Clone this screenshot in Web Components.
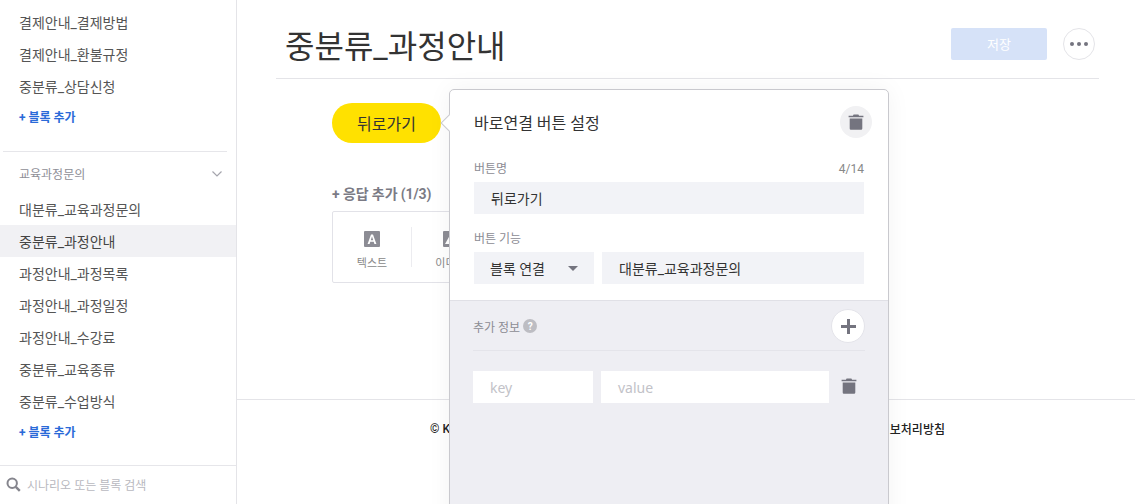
<!DOCTYPE html>
<html lang="ko">
<head>
<meta charset="utf-8">
<title>중분류_과정안내</title>
<style>
  html, body { margin: 0; height: 100%; overflow: hidden; background: #fff; }
  body { font-family: Roboto, "Noto Sans CJK KR", sans-serif; color: #333; }
</style>
</head>
<body>
<bot-app></bot-app>

<script>
const TRASH = `<svg viewBox="0 0 16 16" width="16" height="16" fill="#74747f"><path d="M5.6 0.4h4.8l.7 1.4H15.4v1.5H0.6V1.8h4.3z"/><path d="M1.7 4.6h12.6V14.6a1.2 1.2 0 0 1-1.2 1.2H2.9a1.2 1.2 0 0 1-1.2-1.2z"/></svg>`;

class SideItem extends HTMLElement {
  connectedCallback() {
    this.attachShadow({ mode: "open" }).innerHTML = `
      <style>
        :host { display: flex; align-items: center; height: 32px; padding-left: 19px; font-size: 14px; color: #555; white-space: nowrap; }
        :host([active]) { background: #f1f1f4; color: #444; }
      </style>
      <slot></slot>`;
  }
}

class SideAdd extends HTMLElement {
  connectedCallback() {
    this.attachShadow({ mode: "open" }).innerHTML = `
      <style>
        :host { display: flex; align-items: center; height: 28px; padding-left: 19px; font-size: 12px; font-weight: 700; color: #2a6ad8; }
      </style>
      + 블록 추가`;
  }
}

class SideNav extends HTMLElement {
  connectedCallback() {
    this.attachShadow({ mode: "open" }).innerHTML = `
      <style>
        :host { display: flex; flex-direction: column; flex: none; width: 236px; height: 504px; border-right: 1px solid #e4e4e8; background: #fff; }
        .list { flex: 1; padding-top: 6px; min-height: 0; }
        hr { border: 0; border-top: 1px solid #e6e6ea; margin: 21px 9px 0 3px; }
        .group { display: flex; align-items: center; justify-content: space-between; box-sizing: border-box; height: 41px; padding: 2px 14px 0 19px; font-size: 12px; color: #8e8e96; }
        .search { display: flex; align-items: center; gap: 6px; height: 39px; box-sizing: border-box; padding: 0 0 1px 6px; border-top: 1px solid #e6e6ea; font-size: 12px; color: #b9b9c0; }
        svg { display: block; }
      </style>
      <div class="list">
        <side-item>결제안내_결제방법</side-item>
        <side-item>결제안내_환불규정</side-item>
        <side-item>중분류_상담신청</side-item>
        <side-add></side-add>
        <hr>
        <div class="group">교육과정문의
          <svg width="10" height="6" viewBox="0 0 10 6" fill="none" stroke="#a5a5ad" stroke-width="1.2"><path d="M.5.5 5 5 9.5.5"/></svg>
        </div>
        <side-item>대분류_교육과정문의</side-item>
        <side-item active>중분류_과정안내</side-item>
        <side-item>과정안내_과정목록</side-item>
        <side-item>과정안내_과정일정</side-item>
        <side-item>과정안내_수강료</side-item>
        <side-item>중분류_교육종류</side-item>
        <side-item>중분류_수업방식</side-item>
        <side-add></side-add>
      </div>
      <div class="search">
        <svg width="15" height="15" viewBox="0 0 15 15" fill="none" stroke="#85858d" stroke-width="2"><circle cx="6.2" cy="6.2" r="4.7"/><path d="M9.8 9.8 13.8 13.8" stroke-width="2.4"/></svg>
        <span>시나리오 또는 블록 검색</span>
      </div>`;
  }
}

class PageHeader extends HTMLElement {
  connectedCallback() {
    this.attachShadow({ mode: "open" }).innerHTML = `
      <style>
        :host { display: flex; align-items: center; height: 68px; margin: 0 36px 0 39px; padding: 10px 4px 0 9px; border-bottom: 1px solid #e4e4e8; }
        h1 { flex: 1; margin: 0; font-size: 32px; font-weight: 400; color: #333; }
        .save { display: flex; align-items: center; justify-content: center; width: 96px; height: 32px; border-radius: 2px; background: #d6e2f8; color: #fff; font-size: 13px; }
        .more { display: flex; align-items: center; justify-content: center; gap: 3px; width: 30px; height: 30px; margin-left: 16px; border: 1px solid #e4e4e8; border-radius: 50%; background: #fff; }
        .more i { width: 4px; height: 4px; border-radius: 50%; background: #74747f; }
        .row { display: flex; align-items: center; margin-top: -1px; }
      </style>
      <h1>중분류_과정안내</h1>
      <div class="row">
        <div class="save">저장</div>
        <div class="more"><i></i><i></i><i></i></div>
      </div>`;
  }
}

class ResponseCard extends HTMLElement {
  connectedCallback() {
    this.attachShadow({ mode: "open" }).innerHTML = `
      <style>
        :host { display: block; margin-top: 41px; }
        .title { font-size: 14px; font-weight: 700; color: #7b7b85; line-height: 20px; letter-spacing: -.1px; }
        .card { display: flex; width: 158px; height: 70px; margin-top: 7px; border: 1px solid #e2e2e8; border-radius: 2px; align-items: center; }
        .opt { display: flex; flex-direction: column; align-items: center; gap: 8px; box-sizing: border-box; width: 78px; height: 40px; padding-top: 4px; font-size: 11px; color: #888; line-height: 17px; }
        .opt + .opt { border-left: 1px solid #ececf0; }
        .opt svg { display: block; flex: none; }
      </style>
      <div class="title">+ 응답 추가 (1/3)</div>
      <div class="card">
        <div class="opt">
          <svg width="16" height="16" viewBox="0 0 16 16"><rect width="16" height="16" rx="1" fill="#8c8c94"/><path d="M3.6 13 7 3.4h2L12.4 13h-2l-.7-2.2H6.3L5.6 13zM6.8 9.2h2.4L8 5.6z" fill="#fff"/></svg>
          <span>텍스트</span>
        </div>
        <div class="opt">
          <svg width="16" height="16" viewBox="0 0 16 16"><rect width="16" height="16" rx="1" fill="#8c8c94"/><path d="M2 13 6.5 5l3 5 1.5-2 3 5z" fill="#fff"/></svg>
          <span>이미지</span>
        </div>
      </div>`;
  }
}

class FieldBox extends HTMLElement {
  connectedCallback() {
    this.attachShadow({ mode: "open" }).innerHTML = `
      <style>
        :host { display: flex; align-items: center; height: 32px; padding-left: 17px; background: #f2f3f7; font-size: 14px; color: #333; box-sizing: border-box; white-space: nowrap; }
        :host([plain]) { background: #fff; color: #c2c2c8; font-family: "Noto Sans", sans-serif; }
      </style>
      <slot></slot>`;
  }
}

class ButtonSettings extends HTMLElement {
  connectedCallback() {
    this.attachShadow({ mode: "open" }).innerHTML = `
      <style>
        :host { position: absolute; left: 117px; top: -14px; z-index: 5; display: block; width: 438px; height: 440px; background: #fff; border: 1px solid #c9c9ce; border-radius: 5px 5px 0 0; box-shadow: 0 0 24px rgba(0,0,0,.05); }
        .arrow { position: absolute; left: -7px; top: 27px; width: 11px; height: 11px; background: #fff; border-left: 1px solid #c9c9ce; border-bottom: 1px solid #c9c9ce; transform: rotate(45deg); }
        .top { padding: 16px 24px 0; height: 210px; box-sizing: border-box; }
        .head { display: flex; align-items: center; justify-content: space-between; height: 32px; margin: 0 -8px 23px 0; font-size: 16px; color: #333; }
        .circle { display: flex; align-items: center; justify-content: center; width: 32px; height: 32px; border-radius: 50%; background: #f1f1f3; }
        .label { display: flex; justify-content: space-between; height: 16px; margin-bottom: 5px; font-size: 12px; line-height: 16px; color: #8c8c94; }
        .count { font-size: 12px; color: #888; }
        .mt { margin-top: 17px; }
        .pair { display: grid; grid-template-columns: 120px 1fr; gap: 8px; }
        .select { justify-content: space-between; padding-left: 16px; }
        .caret { width: 0; height: 0; border: 5px solid transparent; border-top: 5px solid #74747f; border-bottom: 0; margin-right: 16px; }
        .bottom { border-top: 1px solid #e0e0e6; background: #eeeef3; height: 229px; padding: 9px 23px 0; }
        .extra { display: flex; align-items: center; justify-content: space-between; height: 40px; border-bottom: 1px solid #e4e4ea; font-size: 12px; color: #8c8c94; }
        .extra .l { display: flex; align-items: center; gap: 3px; margin-top: -8px; }
        .help { display: flex; align-items: center; justify-content: center; width: 14px; height: 14px; border-radius: 50%; background: #bdbdc3; color: #fff; font-size: 10px; font-weight: 700; }
        .plus { display: flex; align-items: center; justify-content: center; width: 32px; height: 32px; margin-top: -8px; border: 1px solid #e4e4ea; border-radius: 50%; background: #fff; }
        .kv { display: grid; grid-template-columns: 120px 228px 16px; column-gap: 8px; align-items: center; margin-top: 20px; }
        .kv svg { margin-left: 4px; margin-top: -2px; display: block; }
      </style>
      <div class="arrow"></div>
      <div class="top">
        <div class="head"><span>바로연결 버튼 설정</span><span class="circle">${TRASH}</span></div>
        <div class="label"><span>버튼명</span><span class="count">4/14</span></div>
        <field-box>뒤로가기</field-box>
        <div class="label mt"><span>버튼 기능</span></div>
        <div class="pair">
          <field-box class="select">블록 연결<span class="caret"></span></field-box>
          <field-box>대분류_교육과정문의</field-box>
        </div>
      </div>
      <div class="bottom">
        <div class="extra">
          <span class="l">추가 정보 <span class="help">?</span></span>
          <span class="plus"><svg width="15" height="15" viewBox="0 0 15 15" fill="#74747f"><path d="M6 0h3v6h6v3H9v6H6V9H0V6h6z"/></svg></span>
        </div>
        <div class="kv">
          <field-box plain>key</field-box>
          <field-box plain>value</field-box>
          ${TRASH}
        </div>
      </div>`;
  }
}

class PageFooter extends HTMLElement {
  connectedCallback() {
    this.attachShadow({ mode: "open" }).innerHTML = `
      <style>
        :host { display: flex; justify-content: space-between; align-items: center; box-sizing: border-box; height: 60px; padding: 0 190px 2px 193px; border-top: 1px solid #e4e4e8; font-size: 12px; font-weight: 500; color: #222; }
      </style>
      <span>© Kakao Corp.</span><span>개인정보처리방침</span>`;
  }
}

class BotApp extends HTMLElement {
  connectedCallback() {
    this.attachShadow({ mode: "open" }).innerHTML = `
      <style>
        :host { display: flex; width: 1135px; height: 504px; overflow: hidden; }
        main { position: relative; flex: 1; min-width: 0; display: flex; flex-direction: column; }
        .content { flex: none; height: 320px; padding: 24px 0 0 95px; box-sizing: border-box; }
        .anchor { position: relative; width: 109px; }
        .pill { display: flex; align-items: center; justify-content: center; height: 40px; border-radius: 20px; background: #ffe100; font-size: 16px; color: #333; }
      </style>
      <side-nav></side-nav>
      <main>
        <page-header></page-header>
        <div class="content">
          <div class="anchor">
            <div class="pill">뒤로가기</div>
            <button-settings></button-settings>
          </div>
          <response-card></response-card>
        </div>
        <page-footer></page-footer>
      </main>`;
  }
}

customElements.define("side-item", SideItem);
customElements.define("side-add", SideAdd);
customElements.define("side-nav", SideNav);
customElements.define("page-header", PageHeader);
customElements.define("response-card", ResponseCard);
customElements.define("field-box", FieldBox);
customElements.define("button-settings", ButtonSettings);
customElements.define("page-footer", PageFooter);
customElements.define("bot-app", BotApp);
</script>
</body>
</html>
